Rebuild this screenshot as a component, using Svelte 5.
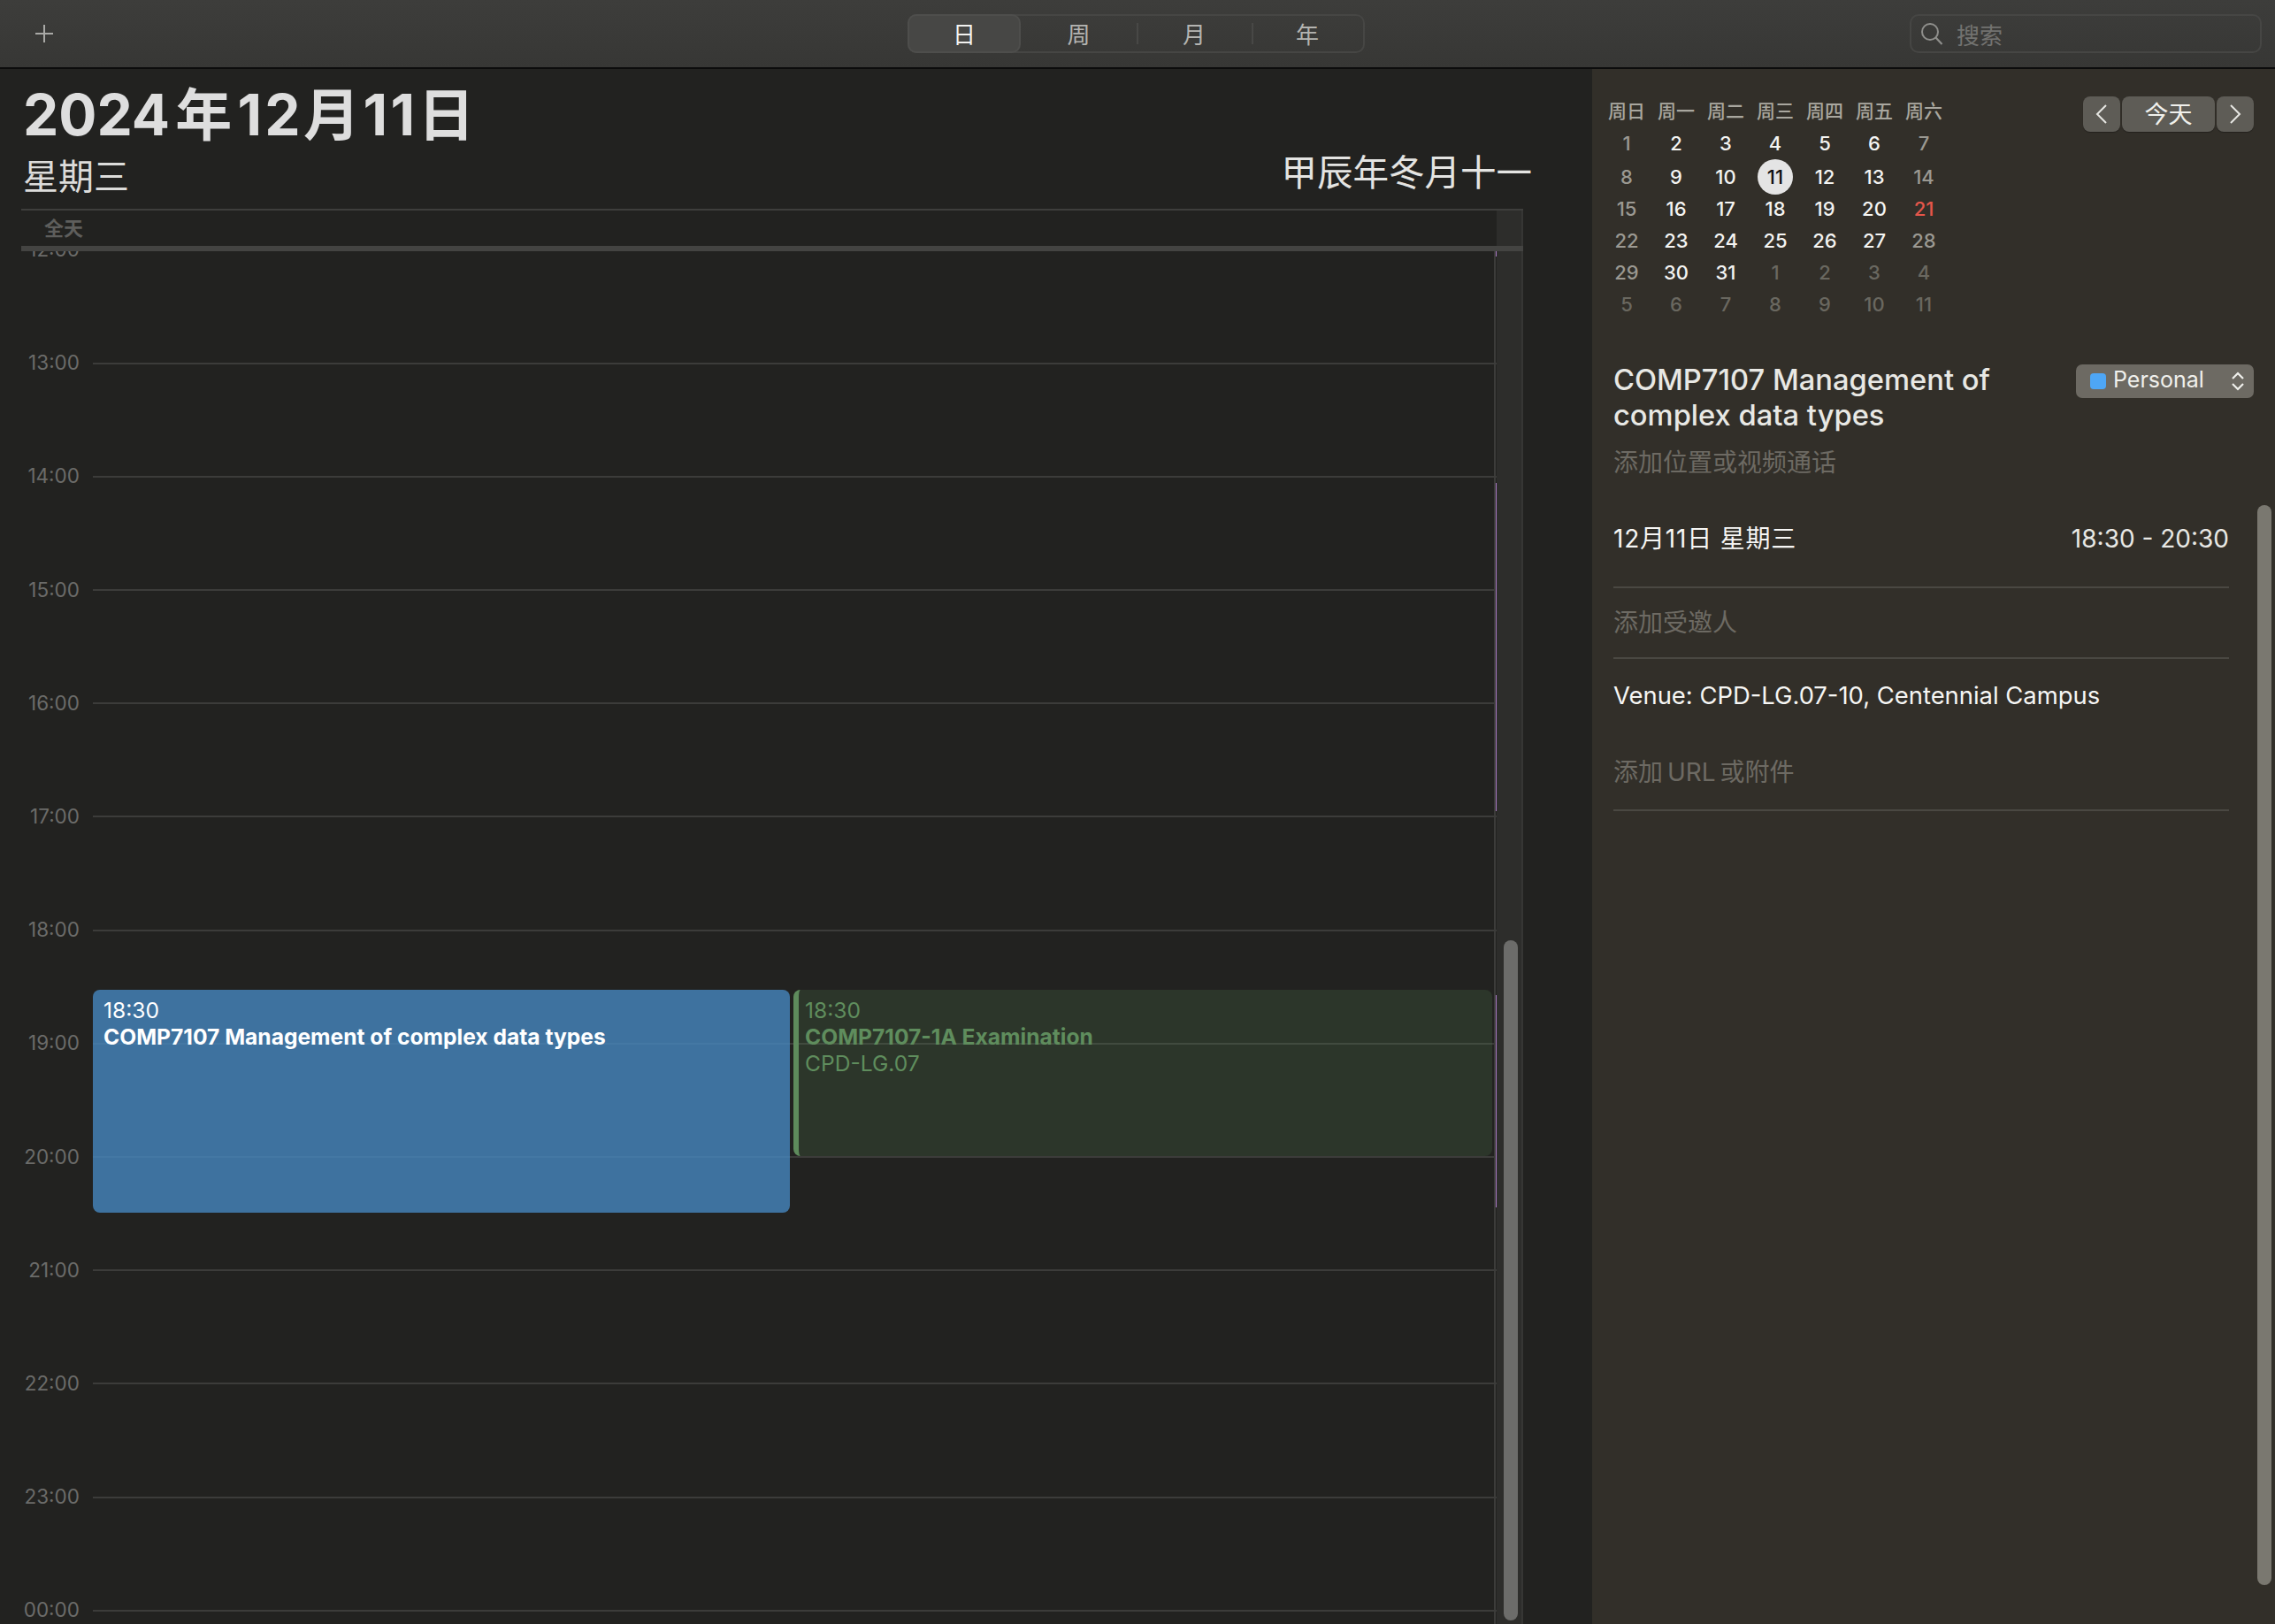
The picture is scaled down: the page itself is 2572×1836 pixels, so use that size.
<script lang="ts">
  const hours = ['12:00','13:00','14:00','15:00','16:00','17:00','18:00','19:00','20:00','21:00','22:00','23:00','00:00'];
  const views = ['日', '周', '月', '年'];
  const weekdays = ['周日','周一','周二','周三','周四','周五','周六'];

  type Day = { n: number; kind: string };
  const days: Day[] = [];
  for (let i = 0; i < 42; i++) {
    const inMonth = i < 31;
    const n = inMonth ? i + 1 : i - 30;
    let kind = 'dim';
    if (inMonth) kind = i % 7 === 0 || i % 7 === 6 ? 'weekend' : 'week';
    if (n === 11 && inMonth) kind = 'today';
    if (n === 21 && inMonth) kind = 'holiday';
    days.push({ n, kind });
  }
</script>

<div class="window">
  <header class="toolbar">
    <button class="add" type="button" aria-label="add">
      <svg width="22" height="22" viewBox="0 0 22 22"><path d="M11 1v20M1 11h20" stroke="#a9a9a6" stroke-width="2" fill="none" /></svg>
    </button>
    <div class="segments">
      {#each views as v, i}
        <div class="segment" class:selected={i === 0} class:sep={i > 1}>{v}</div>
      {/each}
    </div>
    <div class="search">
      <svg width="26" height="26" viewBox="0 0 26 26"><circle cx="11" cy="11" r="9" stroke="#8f8f8c" stroke-width="2" fill="none" /><path d="M17.500 17.500 24.500 25" stroke="#8f8f8c" stroke-width="2.200" fill="none" /></svg>
      <span>搜索</span>
    </div>
  </header>

  <div class="body">
    <main class="day">
      <div class="day-head">
        <div>
          <h1>2024 年 <span class="md">12月11日</span></h1>
          <p class="weekday">星期三</p>
        </div>
        <p class="lunar">甲辰年冬月十一</p>
      </div>

      <div class="allday">
        <span>全天</span>
        <div class="gutter"></div>
      </div>

      <div class="scroller">
        <div class="hours">
          {#each hours as h}
            <div class="hour">
              <span class="label">{h}</span>
              <div class="line"></div>
            </div>
          {/each}
        </div>

        <div class="event blue">
          <p>18:30</p>
          <p class="name">COMP7107 Management of complex data types</p>
        </div>
        <div class="event green">
          <p>18:30</p>
          <p class="name">COMP7107-1A Examination</p>
          <p>CPD-LG.07</p>
        </div>

        <div class="edge edge-a"></div>
        <div class="edge edge-b"></div>
        <i class="mark" style="top:0;height:6px"></i>
        <i class="mark" style="top:262px;height:371px"></i>
        <i class="mark" style="top:841px;height:240px"></i>

        <div class="gutter"><div class="thumb"></div></div>
      </div>
    </main>

    <aside class="side">
      <div class="mini-top">
        <div class="mini">
          {#each weekdays as w}<span class="wd">{w}</span>{/each}
          {#each days as d}
            <span class="d {d.kind}">{d.n}</span>
          {/each}
        </div>
        <div class="nav">
          <button type="button" class="nav-btn" aria-label="previous">
            <svg width="14" height="24" viewBox="0 0 14 24"><path d="M12 2 2 12l10 10" stroke="#e6e6e2" stroke-width="2" fill="none" /></svg>
          </button>
          <button type="button" class="nav-btn today-btn">今天</button>
          <button type="button" class="nav-btn" aria-label="next">
            <svg width="14" height="24" viewBox="0 0 14 24"><path d="M2 2l10 10L2 22" stroke="#e6e6e2" stroke-width="2" fill="none" /></svg>
          </button>
        </div>
      </div>

      <div class="detail">
        <div class="title-row">
          <h2>COMP7107 Management of complex data types</h2>
          <div class="chip">
            <i class="swatch"></i>
            <span>Personal</span>
            <svg width="16" height="22" viewBox="0 0 16 22"><path d="M2 8l6-6 6 6M2 14l6 6 6-6" stroke="#f0f0ec" stroke-width="2.200" fill="none" /></svg>
          </div>
        </div>
        <p class="ph loc">添加位置或视频通话</p>
        <div class="when">
          <span class="date">12月11日 星期三</span>
          <span class="time">18:30 - 20:30</span>
        </div>
        <p class="ph invite">添加受邀人</p>
        <p class="venue">Venue: CPD-LG.07-10, Centennial Campus</p>
        <p class="ph url">添加 URL 或附件</p>
      </div>

      <div class="side-thumb"></div>
    </aside>
  </div>
</div>

<style>
  :global(body) {
    margin: 0;
    background: #222220;
  }

  p, h1, h2 {
    margin: 0;
    font-weight: inherit;
  }

  .window {
    width: 2572px;
    height: 1836px;
    overflow: hidden;
    display: flex;
    flex-direction: column;
    font-family: Inter, "Noto Sans CJK SC", sans-serif;
    color: #e4e4e2;
    background: #222220;
  }

  .toolbar {
    flex: none;
    height: 76px;
    display: grid;
    grid-template-columns: 1026px 517px 1fr;
    align-items: center;
    background: linear-gradient(#3d3d3b, #373735);
    border-bottom: 2px solid #0c0c0c;
    box-sizing: content-box;
  }

  .add {
    justify-self: start;
    margin-left: 39px;
    padding: 0;
    border: 0;
    background: none;
    display: flex;
  }

  .segments {
    height: 44px;
    display: grid;
    grid-template-columns: 126px 131px 130px 1fr;
    box-sizing: border-box;
    border: 2px solid #464644;
    border-radius: 10px;
    font-size: 26px;
    color: #b4b4b1;
  }

  .segment {
    display: flex;
    align-items: center;
    justify-content: center;
    position: relative;
    padding-bottom: 2px;
  }

  .segment.selected {
    margin: -2px 0 -2px -2px;
    background: #474745;
    border: 2px solid #4e4e4c;
    border-radius: 10px;
    color: #f2f2f0;
  }

  .segment.sep::before {
    content: '';
    position: absolute;
    left: 0;
    top: 8px;
    bottom: 8px;
    width: 2px;
    background: #484846;
  }

  .search {
    justify-self: end;
    margin-right: 15px;
    width: 398px;
    height: 44px;
    box-sizing: border-box;
    border: 2px solid #464644;
    border-radius: 10px;
    display: flex;
    align-items: center;
    gap: 15px;
    padding-left: 10px;
    font-size: 26px;
    color: #727270;
  }

  .body {
    flex: 1;
    display: flex;
    min-height: 0;
  }

  .day {
    width: 1800px;
    flex: none;
    padding-left: 24px;
    box-sizing: border-box;
    display: flex;
    flex-direction: column;
    min-height: 0;
  }

  .day-head {
    height: 158px;
    flex: none;
    display: flex;
    justify-content: space-between;
    align-items: flex-end;
    padding: 0 68px 0 2px;
    box-sizing: border-box;
  }

  h1 {
    font-size: 64px;
    line-height: 80px;
    font-weight: 700;
    word-spacing: -9px;
    white-space: nowrap;
    color: #dedede;
  }

  .md {
    letter-spacing: 3.4px;
  }

  .weekday,
  .lunar {
    font-size: 40px;
    line-height: 48px;
  }

  .weekday {
    margin-top: 6px;
    padding-bottom: 12px;
    color: #dcdcda;
  }

  .lunar {
    font-size: 40.5px;
    padding-bottom: 16px;
    color: #e4e4e2;
  }

  .allday {
    flex: none;
    width: 1698px;
    height: 48px;
    box-sizing: border-box;
    border-top: 2px solid #3e3e3c;
    border-bottom: 6px solid #444442;
    position: relative;
    display: flex;
    align-items: center;
    padding: 0 0 4px 26px;
    font-size: 22px;
    font-weight: 600;
    color: #5e5e5c;
  }

  .scroller {
    flex: 1;
    width: 1698px;
    min-height: 0;
    position: relative;
    overflow: hidden;
  }

  .hours {
    margin-top: -2.5px;
    width: 1668px;
  }

  .hour {
    height: 128.2px;
    display: grid;
    grid-template-columns: 81px 1fr;
  }

  .label {
    height: 2px;
    line-height: 2px;
    margin-top: -0.5px;
    padding-right: 15px;
    text-align: right;
    font-size: 22.5px;
    color: #6b6b69;
  }

  .line {
    height: 2px;
    background: #3c3c3a;
  }

  .event {
    position: absolute;
    top: 835px;
    box-sizing: border-box;
    font-size: 24.6px;
    line-height: 30px;
    padding-top: 8px;
  }

  .event .name {
    font-weight: 700;
  }

  .blue {
    left: 81px;
    width: 788px;
    height: 252px;
    padding-left: 12px;
    border-radius: 8px;
    background: rgba(70, 135, 191, 0.8);
    color: #fff;
  }

  .green {
    left: 873px;
    width: 790px;
    height: 188px;
    padding-left: 7px;
    border-left: 6px solid #5e8b5c;
    border-radius: 8px;
    background: rgba(84, 134, 87, 0.2);
    color: #5f8d5d;
  }

  .edge {
    position: absolute;
    top: 0;
    bottom: 0;
    background: #3c3c3a;
  }

  .edge-a {
    left: 1665px;
    width: 2px;
  }

  .edge-b {
    left: 1667.5px;
    width: 1px;
  }

  .mark {
    position: absolute;
    left: 1667px;
    width: 2px;
    background: #a878c4;
  }

  .gutter {
    position: absolute;
    top: 0;
    bottom: 0;
    left: 1668px;
    width: 30px;
    box-sizing: border-box;
    background: #2d2d2b;
    border-right: 2px solid #363634;
  }

  .thumb {
    position: absolute;
    top: 779px;
    left: 8px;
    width: 16px;
    height: 769px;
    border-radius: 8px;
    background: #6c6c6a;
  }

  .side {
    flex: 1;
    position: relative;
    background: #322f29;
  }

  .mini-top {
    display: flex;
    justify-content: space-between;
    padding: 28px 24px 0 11px;
  }

  .mini {
    display: grid;
    grid-template-columns: repeat(7, 56px);
    grid-template-rows: 36px 40px repeat(5, 36px);
    justify-items: center;
    align-items: center;
  }

  .wd {
    font-size: 21px;
    font-weight: 500;
    color: #a9a79f;
  }

  .d {
    font-size: 22px;
    font-weight: 500;
    line-height: 36px;
  }

  .week { color: #f4f4f2; }
  .weekend { color: #9b9992; }
  .dim { color: #6a6860; }
  .holiday { color: #e5564a; }

  .today {
    width: 40px;
    height: 40px;
    line-height: 40px;
    text-align: center;
    border-radius: 50%;
    background: #e4e4e4;
    color: #111;
  }

  .nav {
    display: flex;
    gap: 2px;
    margin-top: 3px;
  }

  .nav-btn {
    width: 42px;
    height: 40px;
    padding: 0;
    border: 0;
    border-radius: 8px;
    background: #5e5c56;
    display: flex;
    align-items: center;
    justify-content: center;
    box-shadow: 0 1px 1px rgba(0, 0, 0, 0.3);
  }

  .today-btn {
    width: 105px;
    padding-bottom: 3px;
    font: inherit;
    font-size: 27px;
    color: #f0f0ec;
  }

  .detail {
    margin: 47px 0 0 24px;
    width: 696px;
  }

  .title-row {
    display: flex;
    justify-content: space-between;
    align-items: flex-start;
    width: 724px;
  }

  h2 {
    width: 500px;
    font-size: 32.7px;
    line-height: 40px;
    font-weight: 500;
    color: #e8e8e4;
  }

  .chip {
    flex: none;
    width: 201px;
    height: 38px;
    margin-top: 3px;
    box-sizing: border-box;
    padding: 0 10px 5px 16px;
    display: flex;
    align-items: center;
    gap: 8px;
    border-radius: 7px;
    background: #6d6a63;
    font-size: 25px;
    color: #f0f0ec;
  }

  .chip svg {
    margin-left: auto;
    margin-top: 5px;
  }

  .swatch {
    width: 18px;
    height: 18px;
    margin-top: 5px;
    border-radius: 4px;
    background: #4ea6f5;
  }

  .ph {
    font-size: 28px;
    line-height: 36px;
    color: #6d6a63;
  }

  .loc {
    margin-top: 16px;
  }

  .when {
    margin-top: 50px;
    height: 74px;
    box-sizing: border-box;
    line-height: 36px;
    display: flex;
    justify-content: space-between;
    font-size: 28px;
    color: #f6f6f4;
    border-bottom: 2px solid #4a4842;
  }

  .date {
    letter-spacing: 0.8px;
  }

  .time {
    color: #e8e8e4;
  }

  .invite {
    height: 80px;
    box-sizing: border-box;
    padding-top: 21px;
    border-bottom: 2px solid #4a4842;
  }

  .venue {
    margin-top: 23px;
    font-size: 27.4px;
    line-height: 36px;
    color: #f6f6f4;
  }

  .url {
    margin-top: 51px;
    height: 60px;
    word-spacing: -3px;
    border-bottom: 2px solid #4a4842;
  }

  .side-thumb {
    position: absolute;
    top: 493px;
    right: 4px;
    width: 16px;
    height: 1221px;
    border-radius: 8px;
    background: #7a7870;
  }
</style>
